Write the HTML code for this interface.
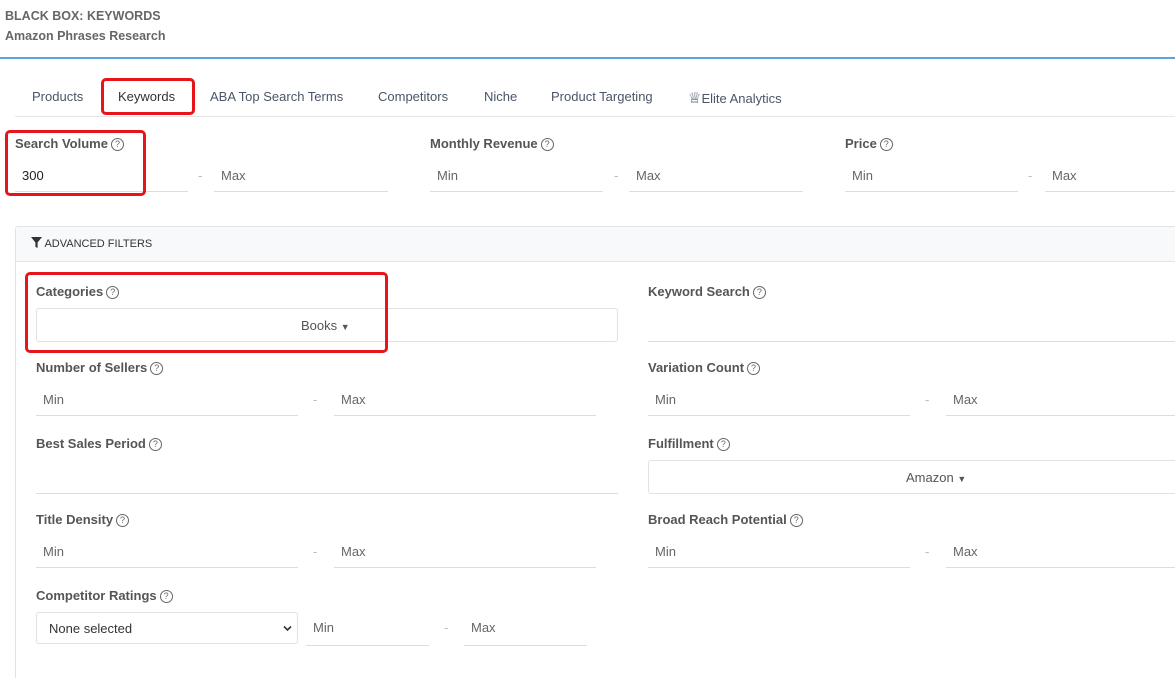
<!DOCTYPE html>
<html style="overflow:hidden;height:678px"><head><style>
body{margin:0;width:1175px;height:678px;overflow:hidden;background:#fff;font-family:"Liberation Sans",sans-serif;position:relative}
.a{position:absolute;white-space:nowrap}
.t{font-size:13px;color:#4a5568}
.lbl{font-size:13px;color:#555;font-weight:bold}
.q{display:inline-block;width:11px;height:11px;border:1px solid #666;border-radius:50%;font-size:9px;line-height:11px;text-align:center;color:#666;font-weight:normal;margin-left:3px;vertical-align:1px}
.in{position:absolute;border-bottom:1px solid #ddd;height:32px;font-size:13px;color:#666;line-height:32px;padding-left:7px;box-sizing:border-box}
.dash{position:absolute;color:#bbb;font-size:13px}
.red{position:absolute;border:3px solid #e8141b;border-radius:5px;box-sizing:border-box}
.box{position:absolute;border:1px solid #e2e2e2;border-radius:3px;box-sizing:border-box;font-size:13px;color:#555}
</style></head><body>
<div class="a" style="left:5px;top:9px;font-size:12.5px;font-weight:bold;color:#666">BLACK BOX: KEYWORDS</div>
<div class="a" style="left:5px;top:29px;font-size:12.5px;font-weight:bold;color:#666">Amazon Phrases Research</div>
<div class="a" style="left:0;top:57px;width:1175px;height:2px;background:#5aa5e0"></div>
<div class="a" style="left:15px;top:116px;width:1160px;height:1px;background:#e6e6e6"></div>
<div class="a t" style="left:32px;top:89px">Products</div>
<div class="a t" style="left:118px;top:89px;color:#333">Keywords</div>
<div class="red" style="left:101px;top:78px;width:94px;height:37px"></div>
<div class="a t" style="left:210px;top:89px">ABA Top Search Terms</div>
<div class="a t" style="left:378px;top:89px">Competitors</div>
<div class="a t" style="left:484px;top:89px">Niche</div>
<div class="a t" style="left:551px;top:89px">Product Targeting</div>
<div class="a t" style="left:688px;top:89px"><span style="font-size:15px">♕</span>Elite Analytics</div>

<div class="a lbl" style="left:15px;top:136px">Search Volume<span class="q">?</span></div>
<div class="in" style="left:15px;top:160px;width:173px;color:#222">300</div>
<div class="dash" style="left:198px;top:168px">-</div>
<div class="in" style="left:214px;top:160px;width:174px">Max</div>
<div class="red" style="left:5px;top:130px;width:141px;height:66px"></div>

<div class="a lbl" style="left:430px;top:136px">Monthly Revenue<span class="q">?</span></div>
<div class="in" style="left:430px;top:160px;width:173px">Min</div>
<div class="dash" style="left:614px;top:168px">-</div>
<div class="in" style="left:629px;top:160px;width:174px">Max</div>
<div class="a lbl" style="left:845px;top:136px">Price<span class="q">?</span></div>
<div class="in" style="left:845px;top:160px;width:173px">Min</div>
<div class="dash" style="left:1028px;top:168px">-</div>
<div class="in" style="left:1045px;top:160px;width:130px">Max</div>

<div class="a" style="left:15px;top:226px;width:1170px;height:460px;border:1px solid #e2e2e2;border-radius:3px"></div>
<div class="a" style="left:16px;top:227px;width:1160px;height:34px;background:#f8f9fa;border-bottom:1px solid #e6e6e6"></div>
<div class="a" style="left:31px;top:237px;font-size:11px;color:#333"><svg width="11" height="11" viewBox="0 0 10 10" style="vertical-align:-1px"><path d="M0 0H10L6 5V10L4 9V5Z" fill="#333"/></svg> ADVANCED FILTERS</div>

<div class="a lbl" style="left:36px;top:284px">Categories<span class="q">?</span></div>
<div class="box" style="left:36px;top:308px;width:582px;height:34px"><span class="a" style="left:264px;top:9px">Books <span style="font-size:9px">▼</span></span></div>
<div class="red" style="left:25px;top:272px;width:363px;height:81px"></div>
<div class="a lbl" style="left:648px;top:284px">Keyword Search<span class="q">?</span></div>
<div class="in" style="left:648px;top:310px;width:527px"></div>

<div class="a lbl" style="left:36px;top:360px">Number of Sellers<span class="q">?</span></div>
<div class="in" style="left:36px;top:384px;width:262px">Min</div>
<div class="dash" style="left:313px;top:392px">-</div>
<div class="in" style="left:334px;top:384px;width:262px">Max</div>
<div class="a lbl" style="left:648px;top:360px">Variation Count<span class="q">?</span></div>
<div class="in" style="left:648px;top:384px;width:262px">Min</div>
<div class="dash" style="left:925px;top:392px">-</div>
<div class="in" style="left:946px;top:384px;width:229px">Max</div>

<div class="a lbl" style="left:36px;top:436px">Best Sales Period<span class="q">?</span></div>
<div class="in" style="left:36px;top:462px;width:582px"></div>
<div class="a lbl" style="left:648px;top:436px">Fulfillment<span class="q">?</span></div>
<div class="box" style="left:648px;top:460px;width:540px;height:34px"><span class="a" style="left:257px;top:9px">Amazon <span style="font-size:9px">▼</span></span></div>

<div class="a lbl" style="left:36px;top:512px">Title Density<span class="q">?</span></div>
<div class="in" style="left:36px;top:536px;width:262px">Min</div>
<div class="dash" style="left:313px;top:544px">-</div>
<div class="in" style="left:334px;top:536px;width:262px">Max</div>
<div class="a lbl" style="left:648px;top:512px">Broad Reach Potential<span class="q">?</span></div>
<div class="in" style="left:648px;top:536px;width:262px">Min</div>
<div class="dash" style="left:925px;top:544px">-</div>
<div class="in" style="left:946px;top:536px;width:229px">Max</div>

<div class="a lbl" style="left:36px;top:588px">Competitor Ratings<span class="q">?</span></div>
<div class="box" style="left:36px;top:612px;width:262px;height:32px"><span class="a" style="left:12px;top:8px;color:#333">None selected</span><svg class="a" style="left:246px;top:12px" width="9" height="7" viewBox="0 0 9 7"><path d="M1 1.5L4.5 5L8 1.5" stroke="#333" stroke-width="1.6" fill="none"/></svg></div>
<div class="in" style="left:306px;top:612px;width:123px;height:34px">Min</div>
<div class="dash" style="left:444px;top:620px">-</div>
<div class="in" style="left:464px;top:612px;width:123px;height:34px">Max</div>
</body></html>
